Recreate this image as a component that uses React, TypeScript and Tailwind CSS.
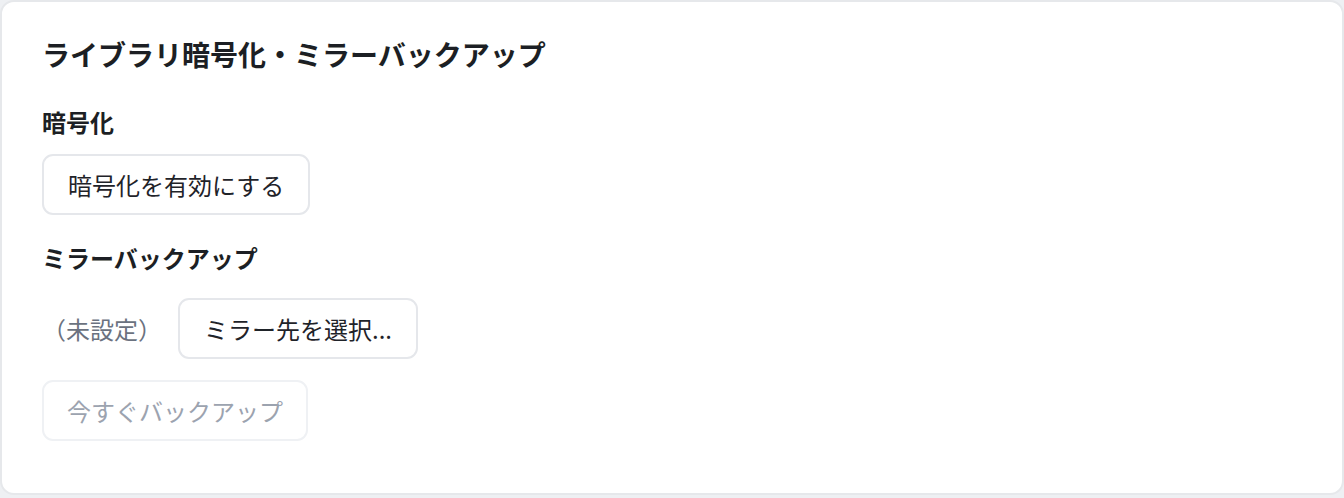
import React from "react";

const font = {
  fontFamily: '"Noto Sans CJK JP", "Noto Sans", sans-serif',
};

export default function App() {
  return (
    <div className="h-[498px] w-[1344px] bg-[#eef0f3]" style={font}>
      <div className="flex w-[1344px] flex-col rounded-[14px] border-2 border-[#e6e8eb] bg-white px-[40px] pt-[32px] pb-[52px]">
        <h1 className="text-[28px] font-bold leading-[40px] text-[#1c1f24]">
          ライブラリ暗号化・ミラーバックアップ
        </h1>

        <h2 className="mt-[31px] text-[24px] font-bold leading-[34px] text-[#1c1f24]">
          暗号化
        </h2>
        <div className="mt-[15px] flex">
          <button className="flex h-[61px] items-center rounded-[11px] border-2 border-[#e5e7eb] bg-white px-[24px] text-[24px] leading-none text-[#1f2329]">
            暗号化を有効にする
          </button>
        </div>

        <h2 className="mt-[26px] text-[24px] font-bold leading-[34px] text-[#1c1f24]">
          ミラーバックアップ
        </h2>
        <div className="mt-[23px] flex items-center gap-[16px]">
          <span className="text-[24px] leading-none text-[#6b7280]">（未設定）</span>
          <button className="flex h-[61px] items-center rounded-[11px] border-2 border-[#e5e7eb] bg-white px-[24px] text-[24px] leading-none text-[#1f2329]">
            ミラー先を選択...
          </button>
        </div>
        <div className="mt-[21px] flex">
          <button
            disabled
            className="flex h-[61px] items-center rounded-[11px] border-2 border-[#eff1f4] bg-white px-[23px] text-[24px] leading-none text-[#9ca3af]"
          >
            今すぐバックアップ
          </button>
        </div>
      </div>
    </div>
  );
}
